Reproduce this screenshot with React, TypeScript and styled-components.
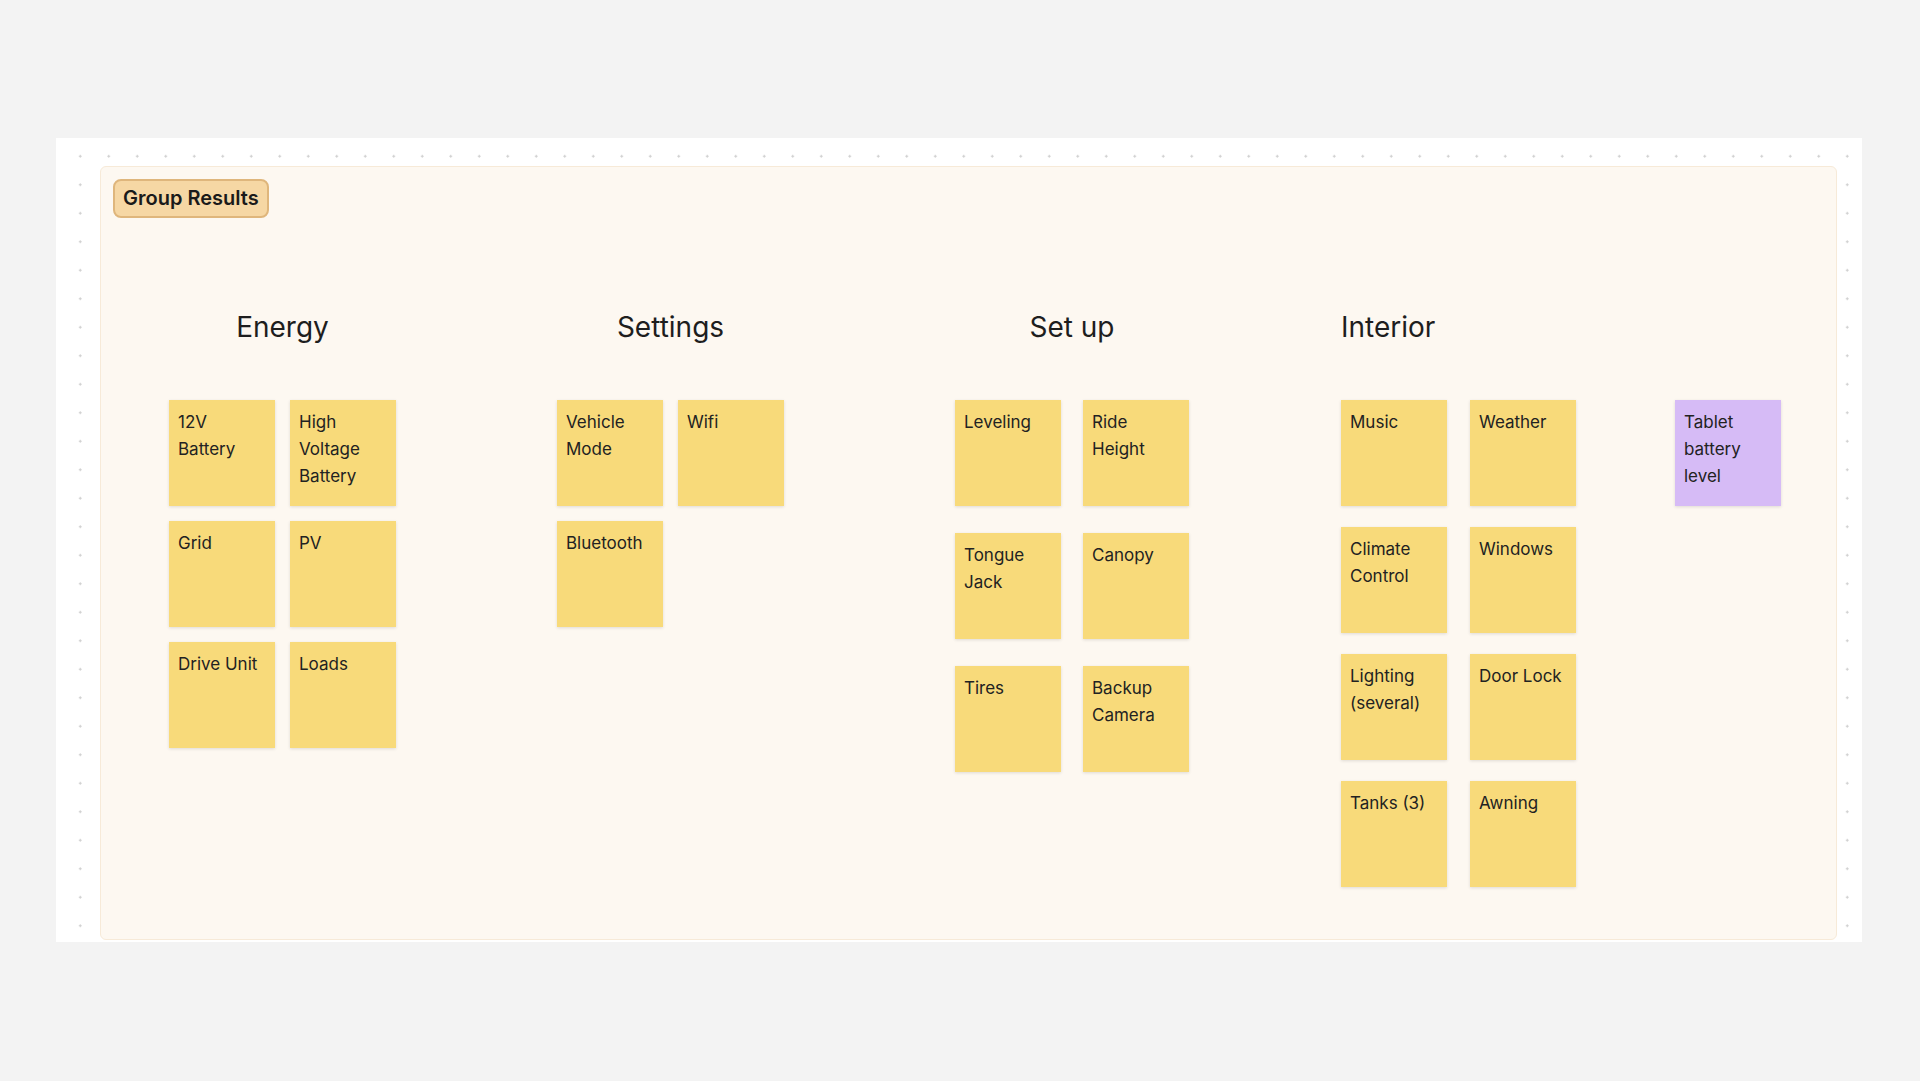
import React from "react";
import styled, { createGlobalStyle } from "styled-components";

const GlobalStyle = createGlobalStyle`
  html, body { margin: 0; padding: 0; background: #f3f3f3; }
  body { font-family: Inter, "Noto Sans", sans-serif; }
`;

const Page = styled.div`
  width: 1920px;
  height: 1081px;
  padding: 138px 58px 0 56px;
  box-sizing: border-box;
`;

const Canvas = styled.div`
  height: 804px;
  background-color: #ffffff;
  background-image: radial-gradient(circle, #cfcfcf 1px, transparent 1.4px);
  background-size: 28.5px 28.5px;
  background-position: 10px 4px;
  padding: 28px 25px 0 44px;
  box-sizing: border-box;
`;

const Frame = styled.section`
  height: 774px;
  background: #fdf8f1;
  border: 1px solid #f7ead8;
  border-radius: 6px;
  box-sizing: border-box;
  padding: 12px 12px 0 12px;
`;

const Badge = styled.div`
  display: inline-block;
  background: #f6d7a4;
  border: 2px solid #dfb67c;
  border-radius: 8px;
  padding: 5px 8px 6px;
  font-weight: 600;
  font-size: 20px;
  color: #1a1a1a;
`;

const Groups = styled.div`
  display: flex;
  align-items: flex-start;
  margin-top: 84px;
  padding-left: 56px;
`;

const Group = styled.div<{ $offset: number }>`
  display: flex;
  flex-direction: column;
  margin-left: ${p => p.$offset}px;
`;

const Title = styled.h2<{ $align: string }>`
  margin: 0 0 48px;
  height: 50px;
  line-height: 50px;
  font-size: 28px;
  font-weight: 400;
  color: #1e1e1e;
  text-align: ${p => p.$align};
`;

const Grid = styled.div<{ $colGap: number; $rowGap: number }>`
  display: grid;
  grid-template-columns: repeat(2, 106px);
  column-gap: ${p => p.$colGap}px;
  row-gap: ${p => p.$rowGap}px;
`;

const Sticky = styled.div<{ $color?: string }>`
  width: 106px;
  height: 106px;
  box-sizing: border-box;
  padding: 9px 9px;
  background: ${p => p.$color || "#f8da7a"};
  box-shadow: 0 1px 3px rgba(0, 0, 0, 0.12);
  font-size: 17px;
  line-height: 27px;
  color: #222;
`;

interface GroupData {
  title: string;
  align: string;
  offset: number;
  colGap: number;
  rowGap: number;
  notes: string[];
}

const groups: GroupData[] = [
  { title: "Energy", align: "center", offset: 0, colGap: 15, rowGap: 15,
    notes: ["12V Battery", "High Voltage Battery", "Grid", "PV", "Drive Unit", "Loads"] },
  { title: "Settings", align: "center", offset: 161, colGap: 15, rowGap: 15,
    notes: ["Vehicle Mode", "Wifi", "Bluetooth"] },
  { title: "Set up", align: "center", offset: 171, colGap: 22, rowGap: 27,
    notes: ["Leveling", "Ride Height", "Tongue Jack", "Canopy", "Tires", "Backup Camera"] },
  { title: "Interior", align: "left", offset: 152, colGap: 23, rowGap: 21,
    notes: ["Music", "Weather", "Climate Control", "Windows", "Lighting (several)", "Door Lock", "Tanks (3)", "Awning"] },
];

export default function App() {
  return (
    <Page>
      <GlobalStyle />
      <Canvas>
        <Frame>
          <Badge>Group Results</Badge>
          <Groups>
            {groups.map(g => (
              <Group key={g.title} $offset={g.offset}>
                <Title $align={g.align}>{g.title}</Title>
                <Grid $colGap={g.colGap} $rowGap={g.rowGap}>
                  {g.notes.map(n => <Sticky key={n}>{n}</Sticky>)}
                </Grid>
              </Group>
            ))}
            <Group $offset={99}>
              <Title $align="left" />
              <Sticky $color="#d6bbf6">Tablet battery level</Sticky>
            </Group>
          </Groups>
        </Frame>
      </Canvas>
    </Page>
  );
}
